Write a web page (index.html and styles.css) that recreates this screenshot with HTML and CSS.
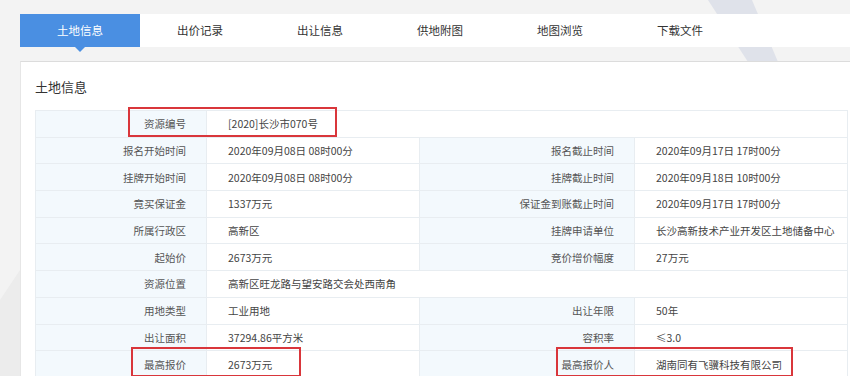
FILE: index.html
```html
<!DOCTYPE html>
<html lang="zh-CN">
<head>
    <meta charset="UTF-8">
    <title>土地信息</title>
    <link rel="stylesheet" href="styles.css">
</head>
<body>
    <!-- 背景装饰 -->
    <svg class="bg-deco" width="850" height="376" viewBox="0 0 850 376">
        <polygon points="708,0 752,0 778,62 748,62" fill="#dfe2ea"/>
        <polygon points="0,300 20,270 20,376 0,376" fill="#ececec"/>
    </svg>

    <div class="page">
        <!-- 标签栏 -->
        <div class="tabs">
            <div class="tab active">土地信息</div>
            <div class="tab">出价记录</div>
            <div class="tab">出让信息</div>
            <div class="tab">供地附图</div>
            <div class="tab">地图浏览</div>
            <div class="tab">下载文件</div>
        </div>

        <!-- 内容区 -->
        <div class="panel">
            <h2 class="panel-title">土地信息</h2>
            <div class="table-wrap">
                <table class="info-table">
                    <colgroup>
                        <col class="c1"><col class="c2"><col class="c3"><col class="c4">
                    </colgroup>
                    <tr>
                        <td class="label">资源编号</td>
                        <td class="value" colspan="3">[2020]长沙市070号</td>
                    </tr>
                    <tr>
                        <td class="label">报名开始时间</td>
                        <td class="value">2020年09月08日 08时00分</td>
                        <td class="label">报名截止时间</td>
                        <td class="value">2020年09月17日 17时00分</td>
                    </tr>
                    <tr>
                        <td class="label">挂牌开始时间</td>
                        <td class="value">2020年09月08日 08时00分</td>
                        <td class="label">挂牌截止时间</td>
                        <td class="value">2020年09月18日 10时00分</td>
                    </tr>
                    <tr>
                        <td class="label">竟买保证金</td>
                        <td class="value">1337万元</td>
                        <td class="label">保证金到账截止时间</td>
                        <td class="value">2020年09月17日 17时00分</td>
                    </tr>
                    <tr>
                        <td class="label">所属行政区</td>
                        <td class="value">高新区</td>
                        <td class="label">挂牌申请单位</td>
                        <td class="value">长沙高新技术产业开发区土地储备中心</td>
                    </tr>
                    <tr>
                        <td class="label">起始价</td>
                        <td class="value">2673万元</td>
                        <td class="label">竞价增价幅度</td>
                        <td class="value">27万元</td>
                    </tr>
                    <tr>
                        <td class="label">资源位置</td>
                        <td class="value" colspan="3">高新区旺龙路与望安路交会处西南角</td>
                    </tr>
                    <tr>
                        <td class="label">用地类型</td>
                        <td class="value">工业用地</td>
                        <td class="label">出让年限</td>
                        <td class="value">50年</td>
                    </tr>
                    <tr>
                        <td class="label">出让面积</td>
                        <td class="value">37294.86平方米</td>
                        <td class="label">容积率</td>
                        <td class="value">≤3.0</td>
                    </tr>
                    <tr>
                        <td class="label">最高报价</td>
                        <td class="value">2673万元</td>
                        <td class="label">最高报价人</td>
                        <td class="value">湖南同有飞骥科技有限公司</td>
                    </tr>
                </table>

                <!-- 红框标注 -->
                <span class="mark mark-id"></span>
                <span class="mark mark-price"></span>
                <span class="mark mark-bidder"></span>
            </div>
        </div>
    </div>
</body>
</html>
```

FILE: styles.css
```css
/* 基础样式 */
body {
    margin: 0;
    background: #f3f3f3;
    font-family: "Microsoft YaHei", "Noto Sans CJK SC", sans-serif;
    color: #333;
    overflow: hidden;
}

.bg-deco {
    position: absolute;
    left: 0;
    top: 0;
}

.page {
    position: relative;
    padding: 14px 0 0 20px;
}

/* 标签栏 */
.tabs {
    display: flex;
    height: 33px;
    background: #fff;
}

.tab {
    position: relative;
    width: 120px;
    line-height: 33px;
    text-align: center;
    font-size: 11.5px;
    color: #333;
}

.tab.active {
    background: #4a8fe2;
    color: #fff;
}

.tab.active::after {
    content: "";
    position: absolute;
    left: 55px;
    bottom: -5px;
    border-left: 5px solid transparent;
    border-right: 5px solid transparent;
    border-top: 5px solid #4a8fe2;
}

/* 内容区 */
.panel {
    margin-top: 14px;
    background: #fff;
    border-top: 1px solid #dcdcdc;
    border-left: 1px solid #e6e6e6;
    padding-left: 14px;
    height: 400px;
}

.panel-title {
    margin: 0;
    height: 48px;
    line-height: 50px;
    font-size: 13px;
    font-weight: normal;
    color: #333;
}

.table-wrap {
    position: relative;
    width: 812px;
}

.info-table {
    width: 812px;
    border-collapse: collapse;
    table-layout: fixed;
    font-size: 10.5px;
}

.c1 { width: 171px; }
.c2 { width: 213px; }
.c3 { width: 215px; }
.c4 { width: 213px; }

.info-table td {
    height: 25.7px;
    padding: 0;
    border: 1px solid #e8edf1;
    white-space: nowrap;
}

.info-table .label {
    background: #f3f9fd;
    text-align: right;
    padding-right: 20px;
    color: #555;
}

.info-table .value {
    padding-left: 21px;
    color: #444;
}

/* 红框标注 */
.mark {
    position: absolute;
    border: 2px solid #d9363b;
    height: 26px;
}

.mark-id {
    left: 93px;
    top: -3px;
    width: 205px;
}

.mark-price {
    left: 96px;
    top: 237px;
    width: 166px;
}

.mark-bidder {
    left: 521px;
    top: 237px;
    width: 233px;
}
```
